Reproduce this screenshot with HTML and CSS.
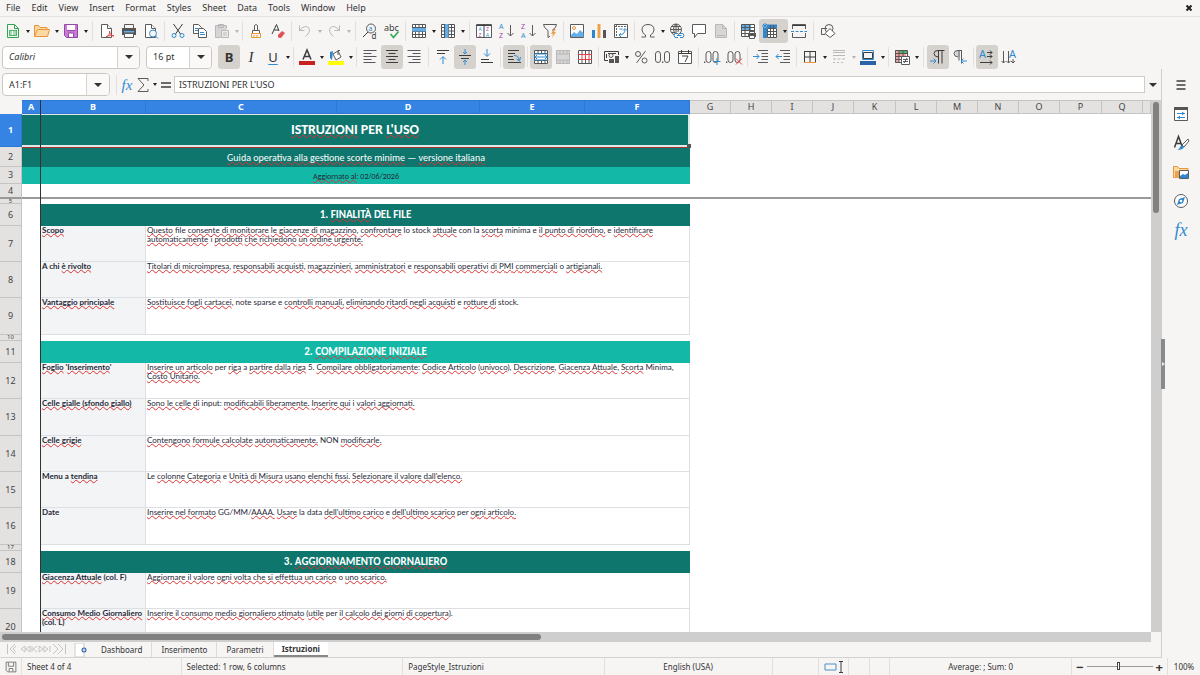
FILE: index.html
```html
<!DOCTYPE html>
<html lang="en">
<head>
<meta charset="utf-8">
<title>Istruzioni</title>
<link rel="stylesheet" href="styles.css">
</head>
<body>
<div class="app">
<nav class="menubar">
<button>File</button><button>Edit</button><button>View</button><button>Insert</button><button>Format</button><button>Styles</button><button>Sheet</button><button>Data</button><button>Tools</button><button>Window</button><button>Help</button>
<button class="close" aria-label="Close"><svg viewBox="0 0 8 8"><path d="M1.5 1.5l5 5M6.500 1.500l-5 5"/></svg></button>
</nav>

<div class="toolbar" role="toolbar" aria-label="Standard">
<button class="tb" aria-label="New"><svg viewBox="0 0 16 16"><path class="gn" d="M2.500 1.500h7l4 4v9h-11z"/><path class="gn" d="M9.500 1.500v4h4"/><path class="fgn" d="M4 7h8v6H4z"/><path class="w" d="M5 9h6M5 11h6M7.500 8v4"/></svg></button><button class="dd" aria-label="New options"></button>
<button class="tb" aria-label="Open"><svg viewBox="0 0 16 16"><path class="folder" d="M.5 13.500v-11h4l1.500 2h7v2"/><path class="folder" d="M.5 13.500l3-7h12l-2 7z"/></svg></button><button class="dd" aria-label="Open options"></button>
<button class="tb" aria-label="Save"><svg viewBox="0 0 16 16"><path class="save" d="M1.500 1.500h13v13h-11l-2-2z"/><path class="fw" d="M4 2h8v5H4zM5 10h6v4H5z"/><path class="pp" d="M4 7.500h8M5.500 14v-4h5v4"/></svg></button><button class="dd" aria-label="Save options"></button>
<span class="sep wide"></span>
<button class="tb" aria-label="Export as PDF"><svg viewBox="0 0 16 16"><path class="paper" d="M2.500 14.500v-13h6l4 4v9z"/><path class="paper" d="M8.500 1.500v4h4"/><path class="rd" d="M7 14c3-1 4-4 3.500-6 0 3 2 5 4.500 5-2-1-5-1-8 1z"/></svg></button>
<button class="tb" aria-label="Print"><svg viewBox="0 0 16 16"><path d="M3.500 5v-3.500h9V5"/><path class="fd" d="M1 5h14v7H1z"/><path class="fbl" d="M3 8h10v1.500H3z"/><path class="fw" d="M3.500 10.500h9v4h-9z"/><path d="M3.500 10.500h9v4h-9z"/></svg></button>
<button class="tb" aria-label="Print Preview"><svg viewBox="0 0 16 16"><path class="paper" d="M2.500 14.500v-13h6l4 4v9z"/><path class="paper" d="M8.500 1.500v4h4"/><circle class="bl bgs" cx="10" cy="10.500" r="3.500"/><path class="bl" d="M12.500 13l2.500 2.500"/></svg></button>
<span class="sep"></span>
<button class="tb" aria-label="Cut"><svg viewBox="0 0 16 16"><path class="k" d="M3.500 1l7 10M12.500 1l-7 10"/><circle class="bl" cx="4" cy="12.500" r="2"/><circle class="bl" cx="12" cy="12.500" r="2"/></svg></button>
<button class="tb" aria-label="Copy"><svg viewBox="0 0 16 16"><path class="paper" d="M1.500 1.500h5l3 3v6h-8z"/><path class="paper" d="M6.500 5.500h5l3 3v6h-8z"/><path class="bl" d="M3 5.500h3M3 7.500h3M8 9.500h4M8 11.500h5"/></svg></button>
<button class="tb off" aria-label="Paste"><svg viewBox="0 0 16 16"><path class="fg" d="M1.500 2.500h11v12h-11z"/><path d="M1.500 2.500h11v3M1.500 2.500v12h5M4.500 1.500h5v3h-5z"/><path class="paper" d="M7.500 7.500h7v7h-7zM9 10h4M9 12h4"/></svg></button><button class="dd off" aria-label="Paste options"></button>
<span class="sep"></span>
<button class="tb" aria-label="Clone Formatting"><svg viewBox="0 0 16 16"><path class="paper" d="M6.500 7V2.500q1.500-2 3 0V7M4.500 7.500h7v3h-7z"/><path class="or" d="M3.500 10.500h9v4h-9zM6 12v2M9 12v2"/></svg></button>
<button class="tb" aria-label="Clear Formatting"><svg viewBox="0 0 16 16"><path class="k" d="M2 11L6.500 1.500 9 8M4 7h5"/><path class="frd" d="M8 12l4-4 3 2-4 5-3-.5z"/></svg></button>
<span class="sep"></span>
<button class="tb off" aria-label="Undo"><svg viewBox="0 0 16 16"><path d="M2.500 2.500v5h5M2.500 7.500q5-6 9-3 3 4-3 9"/></svg></button><button class="dd off" aria-label="Undo options"></button>
<button class="tb off" aria-label="Redo"><svg viewBox="0 0 16 16"><path d="M13.500 2.500v5h-5M13.500 7.500q-5-6-9-3-3 4 3 9"/></svg></button><button class="dd off" aria-label="Redo options"></button>
<span class="sep wide"></span>
<button class="tb" aria-label="Find and Replace"><svg viewBox="0 0 16 16"><circle cx="9" cy="5.500" r="4.500"/><path class="k" d="M6 9l-5 5"/><text class="tbl" x="6.500" y="8" font-size="7">a</text><text class="tk" x="9.500" y="15.500" font-size="8">d</text></svg></button>
<button class="tb" aria-label="Spelling"><svg viewBox="0 0 16 16"><text class="tk" x="0" y="8" font-size="9">abc</text><path class="gn thick" d="M6.500 11l3 3.500 5-6"/></svg></button>
<span class="sep"></span>
<button class="tb" aria-label="Row"><svg viewBox="0 0 16 16"><path class="fw" d="M1 1h14v14H1z"/><path class="grid" d="M1.500 1.500h13v13h-13zM1.500 4.500h13M1.500 8.500h13M1.500 11.500h13M4.500 1.500v13M8 1.500v13M11.500 1.500v13"/><path class="fbl" d="M1 5h14v3.500H1z"/></svg></button><button class="dd" aria-label="Row options"></button>
<button class="tb" aria-label="Column"><svg viewBox="0 0 16 16"><path class="fw" d="M1 1h14v14H1z"/><path class="grid" d="M1.500 1.500h13v13h-13zM1.500 4.500h13M1.500 8h13M1.500 11.500h13M4.500 1.500v13M8.500 1.500v13M11.500 1.500v13"/><path class="fbl" d="M5 1h3.500v14H5z"/></svg></button><button class="dd" aria-label="Column options"></button>
<span class="sep wide"></span>
<button class="tb" aria-label="Sort"><svg viewBox="0 0 16 16"><path class="paper" d="M.5 1.500h15v13H.5z"/><path class="k" d="M8 1.500v13M.5 2.500h15"/><text class="tbl" x="2.500" y="8" font-size="5">A</text><text class="tpp" x="2.500" y="14" font-size="5">Z</text><text class="tpp" x="10" y="8" font-size="5">Z</text><text class="tbl" x="10" y="14" font-size="5">A</text></svg></button>
<button class="tb" aria-label="Sort Ascending"><svg viewBox="0 0 16 16"><text class="tbl" x="1" y="6" font-size="7">A</text><text class="tpp" x="1" y="15" font-size="7">Z</text><path d="M12.500 2v11M9.500 10l3 3 3-3"/></svg></button>
<button class="tb" aria-label="Sort Descending"><svg viewBox="0 0 16 16"><text class="tpp" x="1" y="6" font-size="7">Z</text><text class="tbl" x="1" y="15" font-size="7">A</text><path d="M12.500 2v11M9.500 10l3 3 3-3"/></svg></button>
<button class="tb" aria-label="AutoFilter"><svg viewBox="0 0 16 16"><path d="M1.500 1.500h13q0 3-4.500 6M1.500 1.500q0 3 4.500 6v7l2-1.500"/><path class="for" d="M12 6l-3 5h2l-1 4 4-6h-2l2-3z"/></svg></button>
<span class="sep"></span>
<button class="tb" aria-label="Insert Image"><svg viewBox="0 0 16 16"><path class="paper" d="M1.500 1.500h13v13h-13z"/><path class="fbl" d="M2 14v-2l3-3 3 2 3-4 3.500 3v4z"/><circle class="or" cx="5" cy="5" r="1.500"/></svg></button>
<button class="tb" aria-label="Insert Chart"><svg viewBox="0 0 16 16"><path class="fbl2" d="M1 7h3v8H1z"/><path class="for" d="M6.500 1h3v14h-3z"/><path class="fd" d="M12 7h3v8h-3z"/></svg></button>
<button class="tb" aria-label="Pivot Table"><svg viewBox="0 0 16 16"><path class="paper" d="M1.500 1.500h13v13h-13z"/><path class="dash" d="M2 3.500h12M3.500 2v12"/><path class="bl" d="M6 12q6 0 6-6M10 7.500l2-2 2 2M8 10l-2 2 2 2M6.500 6h3"/></svg></button>
<span class="sep"></span>
<button class="tb" aria-label="Special Character"><svg viewBox="0 0 16 16"><path d="M1.500 14h4v-2Q2 10 2 7q0-5.500 6-5.500T14 7q0 3-3.500 5v2h4"/></svg></button><button class="dd" aria-label="Special Character options"></button>
<button class="tb" aria-label="Hyperlink"><svg viewBox="0 0 16 16"><circle cx="7" cy="6.500" r="5.500"/><path d="M1.500 6.500h11M7 1v11M2.500 3.500h9M2.500 9.500h4M7 1Q2 6 7 12M7 1q4 4 2 8"/><path class="bl bgs" d="M9 10.500H6q-2 2 0 4h3M11 10.500h3q2 2 0 4h-3M8 12.500h4.500"/></svg></button>
<button class="tb" aria-label="Comment"><svg viewBox="0 0 16 16"><path class="paper" d="M1.500 1.500h13v9h-8l-3 4v-4h-2z"/></svg></button>
<button class="tb off" aria-label="Headers and Footers"><svg viewBox="0 0 16 16"><path class="fg" d="M2.500 1.500h7l4 4v9h-11z"/><path d="M4 12.500h8M9.500 1.500v4h4M2.500 1.500h7l4 4v9h-11z"/></svg></button>
<span class="sep"></span>
<button class="tb" aria-label="Print Area"><svg viewBox="0 0 16 16"><path class="fw" d="M1 1h14v13H1z"/><path class="fbl" d="M1 1h10v6H1z"/><path class="grid" d="M1.500 1.500h13v12h-13zM1.500 4.500h13M1.500 7.500h13M1.500 10.500h13M5 1.500v12M9.500 1.500v12"/><path class="fd" d="M8 10h8v4H8z"/><path class="paper" d="M9.500 12.500h5v3h-5zM9.500 8.500h5v2h-5z"/></svg></button>
<button class="tb on" aria-label="Freeze Rows and Columns" aria-pressed="true"><svg viewBox="0 0 16 16"><path class="fw" d="M5 5h10v10H5z"/><path class="fbl2" d="M1 5h4v10H1zM5 1.500h10V5H5z"/><path class="grid" d="M5.500 5.500h9v9h-9zM5.500 8.500h9M5.500 11.500h9M8.500 2v12M11.500 2v12"/><path class="bl" d="M3 0v5M0 3h5M1 1l4 4M5 1L1 5"/></svg></button><button class="dd on" aria-label="Freeze options"></button>
<button class="tb" aria-label="Split Window"><svg viewBox="0 0 16 16"><path d="M1.500 6V1.500h13V6M1.500 10v4.500h13V10"/><path class="k" d="M1.500 2.500h13"/><path class="bl" d="M0 8.500h3M4.500 8.500h3M9 8.500h3M13.500 8.500H16"/></svg></button>
<span class="sep wide"></span>
<button class="tb" aria-label="Draw Functions"><svg viewBox="0 0 16 16"><path d="M5 11.500H1.500v-6H7"/><circle cx="9" cy="5.500" r="4"/><path class="paper" d="M10 5.500l5 5-5 4-5-4z"/></svg></button>
</div>

<div class="toolbar format" role="toolbar" aria-label="Formatting">
<div class="combo font"><input type="text" aria-label="Font Name" value="Calibri"><button class="drop" aria-label="Font list"></button></div>
<div class="combo size"><input type="text" aria-label="Font Size" value="16 pt"><button class="drop" aria-label="Size list"></button></div>
<button class="tb on letter bold" aria-label="Bold" aria-pressed="true">B</button>
<button class="tb letter ital" aria-label="Italic">I</button>
<button class="tb letter und" aria-label="Underline">U</button><button class="dd" aria-label="Underline options"></button>
<span class="sep"></span>
<button class="tb" aria-label="Font Color"><svg viewBox="0 0 16 16"><path class="k thick" d="M4 10.500L8 1l4 9.500M5.500 7.500h5"/><path class="fred" d="M0 12h16v4H0z"/></svg></button><button class="dd" aria-label="Font Color options"></button>
<button class="tb" aria-label="Background Color"><svg viewBox="0 0 16 16"><path class="paper" d="M5 5l5-3 3 6-5 3zM10 6V1.500h2"/><path class="fbl2" d="M2 3l3-1-1 9-2-2z"/><path class="fyl" d="M0 12h16v4H0z"/></svg></button><button class="dd" aria-label="Background Color options"></button>
<span class="sep"></span>
<button class="tb" aria-label="Align Left"><svg viewBox="0 0 16 16"><path d="M1.500 1.500h13M1.500 4.500h8M1.500 7.500h13M1.500 10.500h8M1.500 13.500h12"/></svg></button>
<button class="tb on" aria-label="Center Horizontally" aria-pressed="true"><svg viewBox="0 0 16 16"><path class="k" d="M2 1.500h12M4.500 4.500h7M2 7.500h12M4.500 10.500h7M2 13.500h12"/></svg></button>
<button class="tb" aria-label="Align Right"><svg viewBox="0 0 16 16"><path d="M1.500 1.500h13M6.500 4.500h8M1.500 7.500h13M6.500 10.500h8M2.500 13.500h12"/></svg></button>
<span class="sep wide"></span>
<button class="tb" aria-label="Align Top"><svg viewBox="0 0 16 16"><path class="k" d="M2 1.500h12M2 4.500h8"/><path class="bl" d="M8 15V8M5 10.500l3-3 3 3"/></svg></button>
<button class="tb on" aria-label="Center Vertically" aria-pressed="true"><svg viewBox="0 0 16 16"><path class="k" d="M2 6.500h12M4 9.500h8"/><path class="bl" d="M8 0v4.500M6 3l2 2 2-2M8 16v-4.500M6 13l2-2 2 2"/></svg></button>
<button class="tb" aria-label="Align Bottom"><svg viewBox="0 0 16 16"><path class="k" d="M2 10.500h8M2 13.500h12"/><path class="bl" d="M8 0v7M5 4.500l3 3 3-3"/></svg></button>
<span class="sep"></span>
<button class="tb on" aria-label="Wrap Text" aria-pressed="true"><svg viewBox="0 0 16 16"><path class="k" d="M2 1.500h11M2 4.500h7M2 7.500h5M2 10.500h6M2 13.500h13"/><path class="bl" d="M8 6.500q5 0 5 5M10.500 10l3 2 1-4"/></svg></button>
<span class="sep"></span>
<button class="tb on" aria-label="Merge and Center" aria-pressed="true"><svg viewBox="0 0 16 16"><path class="fw" d="M1 1h14v14H1z"/><path class="grid" d="M1.500 1.500h13v13h-13zM1.500 4.500h13M1.500 11.500h13M5 1.500v3M8.500 1.500v3M12 1.500v3M5 11.500v3M8.500 11.500v3M12 11.500v3"/><path class="bl" d="M1 8h14M4 6L2 8l2 2M12 6l2 2-2 2M1 5h14M1 11h14"/></svg></button>
<button class="tb off" aria-label="Merge Cells"><svg viewBox="0 0 16 16"><path class="fg" d="M1 1h14v14H1z"/><path d="M1.500 1.500h13v13h-13zM1.500 5h13M1.500 11h13M5 1.500V5M8.500 1.500V5M12 1.500V5M5 11v3.500M8.500 11v3.500M12 11v3.500"/></svg></button>
<button class="tb" aria-label="Unmerge Cells"><svg viewBox="0 0 16 16"><path class="fw" d="M1 1h14v14H1z"/><path class="grid" d="M1.500 1.500h13v13h-13zM5 1.500v4M8.500 1.500v4M12 1.500v4M5 11v3.500M8.500 11v3.500M12 11v3.500"/><path class="rd" d="M1 5.500h14M1 10.500h14M5 6v4.500M8.500 6v4.500M12 6v4.500"/></svg></button>
<span class="sep"></span>
<button class="tb" aria-label="Format as Currency"><svg viewBox="0 0 16 16"><path class="k" d="M4 11.500H.5v-9h14V6M2.500 9V5M4 4.500h8"/><circle cx="7" cy="6.500" r="2"/><path class="fd" d="M5 10h5v4H5zM11 7h4v7h-4z"/></svg></button><button class="dd" aria-label="Currency options"></button>
<button class="tb" aria-label="Format as Percent"><svg viewBox="0 0 16 16"><circle cx="5" cy="5" r="2.500"/><circle cx="11.500" cy="11.500" r="2.500"/><path d="M12.500 2l-9 12"/></svg></button>
<button class="tb" aria-label="Format as Number"><svg viewBox="0 0 16 16"><rect x=".5" y="2.500" width="5" height="11" rx="2.500"/><rect x="9.500" y="2.500" width="5" height="11" rx="2.500"/><path class="fd" d="M7 12.500h1.300V14H7z"/></svg></button>
<button class="tb" aria-label="Format as Date"><svg viewBox="0 0 16 16"><path class="paper" d="M1.500 2.500h13v12h-13z"/><path class="k" d="M1.500 4.500h13M4.500 1v3M11.500 1v3M5 7h6l-3 6"/></svg></button>
<span class="sep"></span>
<button class="tb" aria-label="Add Decimal Place"><svg viewBox="0 0 16 16"><rect x="2" y="2.500" width="5" height="11" rx="2.500"/><rect x="9" y="2.500" width="5" height="11" rx="2.500"/><path class="fd" d="M0 12.500h1.300V14H0z"/><path class="bl" d="M13 9v7M9.500 12.500h7"/></svg></button>
<button class="tb" aria-label="Delete Decimal Place"><svg viewBox="0 0 16 16"><rect x="2" y="2.500" width="5" height="11" rx="2.500"/><rect x="9" y="2.500" width="5" height="11" rx="2.500"/><path class="fd" d="M0 12.500h1.300V14H0z"/><path class="rd" d="M10 9.500l6 6M16 9.500l-6 6"/></svg></button>
<span class="sep"></span>
<button class="tb" aria-label="Increase Indent"><svg viewBox="0 0 16 16"><path d="M5 1.500h10M8.500 4.500H15M8.500 7.500H15M8.500 10.500H15M5 13.500h10"/><path class="bl" d="M0 7.500h6M3.500 5L6 7.500 3.500 10"/></svg></button>
<button class="tb" aria-label="Decrease Indent"><svg viewBox="0 0 16 16"><path d="M5 1.500h10M8.500 4.500H15M8.500 7.500H15M8.500 10.500H15M5 13.500h10"/><path class="bl" d="M1 7.500h6M3.500 5L1 7.500 3.500 10"/></svg></button>
<span class="sep"></span>
<button class="tb" aria-label="Borders"><svg viewBox="0 0 16 16"><path class="k" d="M2.500 2v12M13.500 2v12M2 2.500h12M8 2v12M2 8h12"/><path class="or" d="M2 13.500h12"/></svg></button><button class="dd" aria-label="Borders options"></button>
<button class="tb off" aria-label="Border Style"><svg viewBox="0 0 16 16"><path d="M2 1.500h12M2 3.500h12M2 6.500h12M2 10h3M6.500 10h3M11 10h3M2 13.500h2M6 13.500h2M10 13.500h2"/></svg></button><button class="dd off" aria-label="Border Style options"></button>
<button class="tb" aria-label="Border Color"><svg viewBox="0 0 16 16"><path class="k" d="M3.500 3.500h9v6h-9z"/><path class="bl" d="M2.500 1.500h11v9h-11z"/><path class="fnv" d="M0 12h16v4H0z"/></svg></button><button class="dd" aria-label="Border Color options"></button>
<span class="sep"></span>
<button class="tb" aria-label="Conditional Formatting"><svg viewBox="0 0 16 16"><path class="fpk" d="M1 1h4v13H1z"/><path class="fgn" d="M5 1h8v3H5z"/><path class="fpk" d="M5 5h7v3H5z"/><path class="grid" d="M1.500 1.500h12v12h-12zM1.500 4.500h12M1.500 7.500h12M1.500 10.500h12M5 1.500v12M9 1.500v12"/><path class="paper" d="M7.500 7.500h8v8h-8zM9 10.500h5M9 12.500h5M13 9l-3 5"/></svg></button><button class="dd" aria-label="Conditional options"></button>
<span class="sep wide"></span>
<button class="tb on" aria-label="Left-To-Right" aria-pressed="true"><svg viewBox="0 0 16 16"><path class="k" d="M14.500 1.500H8q-4 0-4 3t4 3.500M8.500 1.500v13M12 1.500v13"/><path class="bl" d="M0 12h6M3.500 9.500L6 12l-2.500 2.500"/></svg></button>
<button class="tb" aria-label="Right-To-Left"><svg viewBox="0 0 16 16"><path class="fg" d="M8 1v7Q3 8 3 4.500T8 1z"/><path d="M10 1.500H6q-4 0-4 3t4 3.500M7 1.500v10M9.500 1.500v13"/><path class="bl" d="M9 12h6M11.500 9.500L9 12l2.500 2.500"/></svg></button>
<span class="sep"></span>
<button class="tb on" aria-label="Text Left to Right" aria-pressed="true"><svg viewBox="0 0 16 16"><text class="tbl" x="0" y="9" font-size="11">A</text><path class="k" d="M8 3.500h5M8 7.500h5M1 13.500h12M11 1.500l2 2-2 2M11 5.500l2 2-2 2M11 11.500l2 2-2 2"/></svg></button>
<button class="tb" aria-label="Text Top to Bottom"><svg viewBox="0 0 16 16"><text class="tbl" x="8" y="9" font-size="11">A</text><path d="M2.500 2v12M7.500 2v12M12 10v4M.5 12l2 2 2-2M5.500 12l2 2 2-2M10 12l2 2 2-2"/></svg></button>
</div>

<main class="work">
<section class="doc">
<div class="formula">
<div class="combo name"><input type="text" aria-label="Name Box" value="A1:F1"><button class="drop" aria-label="Name list"></button></div>
<span class="sep"></span>
<button class="fx" aria-label="Function Wizard">fx</button>
<button class="tb slim" aria-label="Select Function"><svg viewBox="0 0 16 16"><path d="M13 4V1.500H3L9 8l-6 6.500h10V12"/></svg></button><button class="dd" aria-label="Function options"></button>
<button class="tb slim" aria-label="Formula"><svg viewBox="0 0 16 16"><path class="k thick" d="M3 6h10M3 10h10"/></svg></button>
<input class="line" type="text" aria-label="Input line" value="ISTRUZIONI PER L'USO">
<button class="drop" aria-label="Expand Formula Bar"></button>
</div>
<div class="gridrow">
<div class="sheet">
<table>
<colgroup><col class="c-h"><col class="c-a"><col class="c-b"><col class="c-c"><col class="c-d"><col class="c-e"><col class="c-e"><col class="c-g"><col class="c-g"><col class="c-g"><col class="c-g"><col class="c-k"><col class="c-g"><col class="c-g"><col class="c-g"><col class="c-g"><col class="c-k"><col class="c-g"><col></colgroup>
<thead><tr><td class="corner"></td><th class="sel">A</th><th class="sel">B</th><th class="sel">C</th><th class="sel">D</th><th class="sel">E</th><th class="sel">F</th><th>G</th><th>H</th><th>I</th><th>J</th><th>K</th><th>L</th><th>M</th><th>N</th><th>O</th><th>P</th><th>Q</th><th></th></tr></thead>
<tbody>
<tr class="r1"><th class="sel">1</th><td class="title" colspan="6"><u>ISTRUZIONI</u> PER <u>L'USO</u><i class="handle"></i></td><td colspan="12"></td></tr>
<tr class="r2"><th>2</th><td class="sub" colspan="6"><u>Guida operativa alla gestione scorte minime</u> — <u>versione italiana</u></td><td colspan="12"></td></tr>
<tr class="r3"><th>3</th><td class="date" colspan="6"><u>Aggiornato al</u>: 02/06/2026</td><td colspan="12"></td></tr>
<tr class="r4"><th>4</th><td colspan="18"></td></tr>
<tr class="gap first"><th>5</th><td colspan="18"></td></tr>
<tr class="head"><th>6</th><td></td><td class="dark" colspan="5">1. <u>FINALITÀ</u> DEL FILE</td><td colspan="12"></td></tr>
<tr class="row"><th>7</th><td></td><td class="lab"><u>Scopo</u></td><td class="txt" colspan="4"><u>Questo</u> file <u>consente di monitorare</u> <u>le giacenze di magazzino</u>, <u>confrontare</u> lo stock <u>attuale</u> con la <u>scorta</u> minima e <u>il punto di riordino,</u> e <u>identificare</u><br><u>automaticamente</u> i <u>prodotti</u> <u>che richiedono</u> <u>un ordine urgente.</u></td><td colspan="12"></td></tr>
<tr class="row"><th>8</th><td></td><td class="lab">A chi <u>è rivolto</u></td><td class="txt" colspan="4"><u>Titolari di microimpresa</u>, <u>responsabili acquisti</u>, <u>magazzinieri</u>, <u>amministratori</u> e <u>responsabili operativi</u> <u>di PMI commerciali</u> o <u>artigianali.</u></td><td colspan="12"></td></tr>
<tr class="row tall"><th>9</th><td></td><td class="lab"><u>Vantaggio principale</u></td><td class="txt" colspan="4"><u>Sostituisce fogli cartacei</u>, note sparse e <u>controlli manuali,</u> <u>eliminando ritardi negli acquisti</u> e <u>rotture di</u> stock.</td><td colspan="12"></td></tr>
<tr class="gap"><th>10</th><td colspan="18"></td></tr>
<tr class="head"><th>11</th><td></td><td class="light" colspan="5">2. <u>COMPILAZIONE INIZIALE</u></td><td colspan="12"></td></tr>
<tr class="row"><th>12</th><td></td><td class="lab"><u>Foglio</u> '<u>Inserimento</u>'</td><td class="txt" colspan="4"><u>Inserire un articolo</u> per <u>riga</u> a <u>partire dalla riga</u> 5. <u>Compilare obbligatoriamente</u>: <u>Codice Articolo</u> (<u>univoco</u>), <u>Descrizione</u>, <u>Giacenza Attuale</u>, <u>Scorta</u> Minima,<br><u>Costo Unitario.</u></td><td colspan="12"></td></tr>
<tr class="row tall"><th>13</th><td></td><td class="lab"><u>Celle gialle (sfondo giallo)</u></td><td class="txt" colspan="4"><u>Sono le celle di</u> input: <u>modificabili liberamente.</u> <u>Inserire qui</u> i <u>valori aggiornati.</u></td><td colspan="12"></td></tr>
<tr class="row"><th>14</th><td></td><td class="lab"><u>Celle grigie</u></td><td class="txt" colspan="4"><u>Contengono</u> <u>formule calcolate</u> <u>automaticamente.</u> NON <u>modificarle.</u></td><td colspan="12"></td></tr>
<tr class="row"><th>15</th><td></td><td class="lab">Menu a <u>tendina</u></td><td class="txt" colspan="4">Le <u>colonne Categoria</u> e <u>Unità di Misura</u> <u>usano elenchi fissi.</u> <u>Selezionare il valore dall'elenco.</u></td><td colspan="12"></td></tr>
<tr class="row tall"><th>16</th><td></td><td class="lab">Date</td><td class="txt" colspan="4"><u>Inserire nel formato</u> GG/MM/<u>AAAA.</u> <u>Usare</u> la data <u>dell'ultimo carico</u> e <u>dell'ultimo scarico</u> per <u>ogni articolo.</u></td><td colspan="12"></td></tr>
<tr class="gap"><th>17</th><td colspan="18"></td></tr>
<tr class="head"><th>18</th><td></td><td class="dark" colspan="5">3. <u>AGGIORNAMENTO GIORNALIERO</u></td><td colspan="12"></td></tr>
<tr class="row"><th>19</th><td></td><td class="lab"><u>Giacenza Attuale</u> (col. F)</td><td class="txt" colspan="4"><u>Aggiornare il valore</u> <u>ogni volta che si effettua un carico</u> o <u>uno scarico.</u></td><td colspan="12"></td></tr>
<tr class="row"><th>20</th><td></td><td class="lab"><u>Consumo Medio Giornaliero</u><br>(col. L)</td><td class="txt" colspan="4"><u>Inserire il consumo medio giornaliero stimato</u> (<u>utile</u> per <u>il calcolo dei giorni di copertura</u>).</td><td colspan="12"></td></tr>
</tbody>
</table>
</div>
<div class="vscroll"><div class="thumb"></div></div>
</div>
<div class="hscroll"><div class="track"><div class="thumb"></div></div></div>
<div class="tabs">
<svg class="nav" viewBox="0 0 62 14"><path d="M2.500 2v10M10 2L5 7l5 5M11 4L8 7l3 3M20 4l-4 3 4 3zM25 4l-4 3 4 3zM27 4v6M32 4l-4 3 4 3M34 4l4 3-4 3zM39 4l4 3-4 3zM45 4v6M48 2l5 5-5 5M53 2l5 5-5 5M60.500 2v10"/></svg>
<button class="add" aria-label="Add Sheet"><svg viewBox="0 0 14 14"><path class="page" d="M1 0h9v14H1z"/><circle class="fnv" cx="10" cy="7" r="2.500"/><path class="w" d="M10 5.500v3M8.500 7h3"/></svg></button>
<button class="tab">Dashboard</button><button class="tab">Inserimento</button><button class="tab">Parametri</button><button class="tab active">Istruzioni</button>
</div>
</section>
<aside class="side">
<button aria-label="Sidebar Settings"><svg viewBox="0 0 16 16"><path class="k thick" d="M3.500 4h9M3.500 8h9M3.500 12h9"/></svg></button>
<button aria-label="Properties"><svg viewBox="0 0 16 16"><path class="paper" d="M1.500 1.500h13v13h-13z"/><path class="fd" d="M1 1h14v3H1z"/><path class="bl" d="M4 7.500h8M4 11.500h8M9 6l2 1.500L9 9M7 10l-2 1.500L7 13"/></svg></button>
<button aria-label="Styles"><svg viewBox="0 0 16 16"><path class="k thick" d="M1.500 12.500l4-11 4 11M3 8.500h5"/><path class="paper" d="M15 4l-6 6 2 2 5-6z"/><path class="fbl2" d="M9 10l2 2q-1 3-7 3 3-1 3-3z"/></svg></button>
<button aria-label="Gallery"><svg viewBox="0 0 16 16"><path class="folder" d="M.5 13.500v-11h4l1.500 2h9v9z"/><path class="for" d="M2 7h5v7H2z"/><path class="paper" d="M6.500 6.500h9v8h-9z"/><path class="fbl2" d="M7 14v-2l3-2 2 1 3-2v5z"/></svg></button>
<button aria-label="Navigator"><svg viewBox="0 0 16 16"><circle class="paper" cx="8" cy="8" r="6.500"/><path class="fbl2" d="M12 4l-2 6-6 2 2-6z"/><circle class="fw" cx="8" cy="8" r="1.300"/></svg></button>
<button class="fx big" aria-label="Functions">fx</button>
</aside>
<button class="grip" aria-label="Hide sidebar"></button>
</main>

<footer class="status">
<span class="s-save"><svg viewBox="0 0 16 16"><path d="M1.500 1.500h13v13h-11l-2-2zM4.500 2v5h7V2M5.500 14v-4h5v4"/></svg></span>
<span class="s-sheet">Sheet 4 of 4</span>
<span class="s-sel">Selected: 1 row, 6 columns</span>
<span class="s-page">PageStyle_Istruzioni</span>
<span class="s-lang">English (USA)</span>
<span class="s-ins"></span>
<span class="s-mode"><svg viewBox="0 0 20 12"><path class="sky" d="M1 3h11v6H1z"/><path class="k" d="M15 .5h4M17 .5v11M15 11.500h4"/></svg></span>
<span class="s-gap"></span><span class="s-gap"></span>
<span class="s-sum">Average: ; Sum: 0</span>
<span class="s-zoom"><button aria-label="Zoom out">−</button><input type="range" min="0" max="100" value="49" aria-label="Zoom"><button aria-label="Zoom in">+</button></span>
<span class="s-pct">100%</span>
</footer>
</div>
</body>
</html>
```
FILE: styles.css
```css
*{box-sizing:border-box}
body{margin:0;background:#f6f5f4;color:#333;font:9px/12px "Noto Sans","Open Sans",sans-serif}
button,input{font:inherit;color:inherit;border:0;background:none;padding:0;margin:0;min-width:0}
.app{height:100vh;display:flex;flex-direction:column;overflow:hidden}

.menubar{flex:none;display:flex;align-items:center;height:17px;padding:0 7px 0 6px;gap:11px;border-bottom:1px solid #e4e2e0}
.menubar .close{margin-left:auto}
.close svg{width:8px;height:8px;display:block;stroke:#222;stroke-width:2}

svg{fill:none;stroke:#5a5a5a;stroke-width:1}
svg text{stroke:none;font-family:"Noto Sans",sans-serif}
.k{stroke:#3c3c3c}
.thick{stroke-width:1.500}
.w{stroke:#fff}
.bl{stroke:#2f8bd0}
.gn{stroke:#2fa552}
.rd{stroke:#e0444a}
.or{stroke:#e8953c}
.pp{stroke:#9548a8}
.sky{stroke:#4a90c4}
.grid{stroke:#555}
.dash{stroke:#666;stroke-dasharray:2 1}
.paper{fill:#fff}
.bgs{fill:#f6f5f4}
.fw{fill:#fff;stroke:none}
.fd{fill:#555;stroke:none}
.fg{fill:#d6d6d6;stroke:none}
.fbl{fill:#63aee8;stroke:none}
.fbl2{fill:#2f86cc;stroke:none}
.fnv{fill:#2a62a8;stroke:none}
.fgn{fill:#4fb56c;stroke:none}
.for{fill:#eda24e;stroke:none}
.frd{fill:#e0505a;stroke:none}
.fpk{fill:#f2a0a0;stroke:none}
.fred{fill:#c9211e;stroke:none}
.fyl{fill:#ff0;stroke:none}
.folder{fill:#fbd9a0;stroke:#e8953c}
.save{fill:#c77bd2;stroke:#9548a8}
.page{fill:#fff;stroke:#ccc}
.tbl{fill:#2f8bd0}
.tpp{fill:#a445b8}
.tk{fill:#3c3c3c}

.toolbar{flex:none;display:flex;align-items:center;height:28px;padding-left:2px}
.toolbar.format{height:24px}
.tb{flex:none;width:22px;height:24px;display:flex;align-items:center;justify-content:center;border-radius:3px}
.tb svg{width:16px;height:16px;overflow:visible}
.tb.slim{width:16px}
.dd{flex:none;width:7px;height:24px;display:flex;align-items:center;justify-content:center}
.dd::after{content:"";border:2px solid transparent;border-top:3px solid #222;border-bottom:0}
.on{background:#d5d1cd}
.tb.on:has(+ .dd.on){border-radius:3px 0 0 3px}
.dd.on{border-radius:0 3px 3px 0}
.off svg{stroke:#b8b8b8}
.off .paper{fill:#eee}
.dd.off::after{border-top-color:#b4b4b4}
.sep{flex:none;width:1px;height:20px;margin:0 2px;background:#e2e0de}
.sep.wide{margin:0 3px}
.letter{font-size:13px}
.bold{font-weight:700}
.ital{font-family:"Liberation Serif",serif;font-size:15px;font-style:italic}
.und{text-decoration:underline #2f8bd0 1px;text-underline-offset:2px}

.combo{flex:none;display:flex;height:23px;border:1px solid #cdc7c2;border-radius:4px;background:#fff;overflow:hidden}
.combo input{flex:1;padding-left:6px}
.drop{flex:none;width:22px;display:flex;align-items:center;justify-content:center}
.combo .drop{border-left:1px solid #d8d4d0;background:#faf9f8}
.drop::after{content:"";border:4px solid transparent;border-top:4px solid #333;border-bottom:0}
.font{width:138px;margin-right:6px}
.font input{font-style:italic}
.size{width:66px;margin-right:6px}

.work{flex:1;min-height:0;display:flex;position:relative}
.doc{flex:1;min-width:0;display:flex;flex-direction:column}
.formula{flex:none;display:flex;align-items:center;height:31px;padding-left:2px}
.name{width:108px;margin-right:4px}
.name .drop{width:23px}
.fx{width:16px;color:#2f8bd0;font:italic 15px/16px "Liberation Serif",serif;text-align:center}
.fx.big{font-size:18px}
.line{flex:1;height:17px;border:1px solid #d0ccc8;background:#fff;padding-left:4px}
.formula > .drop{width:16px}

.gridrow{flex:1;min-height:0;display:flex}
.sheet{flex:1;min-width:0;overflow:hidden;background:#fff;position:relative}
.sheet::after{content:"";position:absolute;left:40px;top:0;bottom:0;width:1px;background:#333}
table{width:100%;table-layout:fixed;border-collapse:separate;border-spacing:0}
.c-h{width:22px}
.c-a{width:19px}
.c-b,.c-e{width:105px}
.c-c{width:191px}
.c-d{width:143px}
.c-g{width:41px}
.c-k{width:42px}
td,th{padding:0;overflow:hidden;white-space:nowrap}
th{background:#e3e2e1;border-right:1px solid #c6c4c2;border-bottom:1px solid #c6c4c2;color:#444;font-weight:400}
thead th{height:14px;line-height:12px;border-top:1px solid #c6c4c2}
th.sel{background:#3584e4;border-color:#2f78d2;color:#fff;font-weight:700}
.corner{background:#f6f5f4}
tbody td{font-family:Lato,Carlito,sans-serif}
.r1{height:33px}
.r2{height:20px}
.r3{height:17px}
.r4{height:15px}
.r4 > *{border-bottom:2px solid #999}
.gap{height:6px}
.gap.first{height:5px}
.gap th{font-size:6px;line-height:5px}
.gap.first th{line-height:4px}
.head{height:22px}
.row{height:36px}
.tall{height:37px}
.title,.sub,.date,.dark,.light{font-family:Carlito,Lato,sans-serif;text-align:center;color:#fff}
.title{position:relative;overflow:visible;background:#0f766e;border:1px solid #dfe9e8;border-width:1px 2px 2px 0;font-size:14px;font-weight:700}
.handle{position:absolute;right:-3px;bottom:-3px;width:4px;height:4px;background:#555}
.sub{background:#0f766e;border-top:1px solid #a33;font-size:10px}
.date{background:#14b8a6;color:#1f2937;font-size:8px}
.dark,.light{font-size:11px;font-weight:700}
.dark{background:#0f766e}
.light{background:#14b8a6}
.lab,.txt{vertical-align:top;border-right:1px solid #dcdfe3;border-bottom:1px solid #dcdfe3;color:#1f2937;font-size:8px;line-height:9px;padding-left:1px}
.lab{background:#f3f4f6;font-weight:700}
u{text-decoration:underline wavy #d33 1px;text-underline-offset:0;text-decoration-skip-ink:none}

.vscroll{flex:none;width:10px;background:#cecece;padding:2px}
.vscroll .thumb{height:21%;border-radius:3px;background:#808080}
.hscroll{flex:none;height:10px;padding-right:10px}
.track{height:10px;background:#cecece;padding:2px}
.track .thumb{width:47%;height:6px;border-radius:3px;background:#808080}
.tabs{flex:none;height:16px;display:flex;align-items:stretch;padding-left:5px;border-bottom:1px solid #d4d2d0;font-size:8px}
.nav{width:62px;height:14px;stroke:#c4c4c4}
.add{width:14px;margin:0 4px 0 7px}
.add svg{width:14px;height:14px;display:block}
.tab{padding:0 9px;border-right:1px solid #dedcda}
.tab.active{padding:0 8px;background:#fff;border:0;border-bottom:2px solid #888;font-weight:700}

.side{flex:none;width:39px;border-left:1px solid #d0ccc8;display:flex;flex-direction:column;align-items:center;padding:8px 0;gap:13px}
.side button{height:16px;width:16px}
.side svg{width:16px;height:16px;display:block;overflow:visible}
.grip{position:absolute;right:35px;top:50%;width:4px;height:50px;margin-top:-25px;background:#8a8a8a;display:flex;align-items:center;justify-content:center}
.grip::after{content:"";border:2px solid transparent;border-left:3px solid #eee;border-right:0}

.status{flex:none;height:17px;display:flex;align-items:stretch;font-size:8px;line-height:17px}
.status > span{min-width:0;border-right:1px solid #e2e0de}
.status > span:last-child{border:0}
.s-save{flex:none;width:22px;padding:3px 5px}
.s-save svg{width:12px;height:12px;display:block}
.s-sheet{flex:158;padding-left:5px}
.s-sel{flex:222;padding-left:5px}
.s-page{flex:201;padding-left:5px}
.s-lang{flex:172;text-align:center}
.s-ins{flex:47}
.s-mode{flex:30;display:flex;align-items:center;justify-content:center}
.s-mode svg{width:20px;height:12px}
.s-gap{flex:20}
.s-sum{flex:186;text-align:center}
.s-zoom{flex:none;width:96px;display:flex;align-items:center;gap:3px;padding:0 4px}
.s-zoom button{font-size:13px;font-weight:700;line-height:14px}
.s-pct{flex:none;width:32px;text-align:center}
input[type=range]{appearance:none;flex:1;width:0;height:10px}
input[type=range]::-webkit-slider-runnable-track{height:1px;background:#999}
input[type=range]::-webkit-slider-thumb{appearance:none;width:3px;height:8px;margin-top:-4px;background:#fff;border:1px solid #444}
```
